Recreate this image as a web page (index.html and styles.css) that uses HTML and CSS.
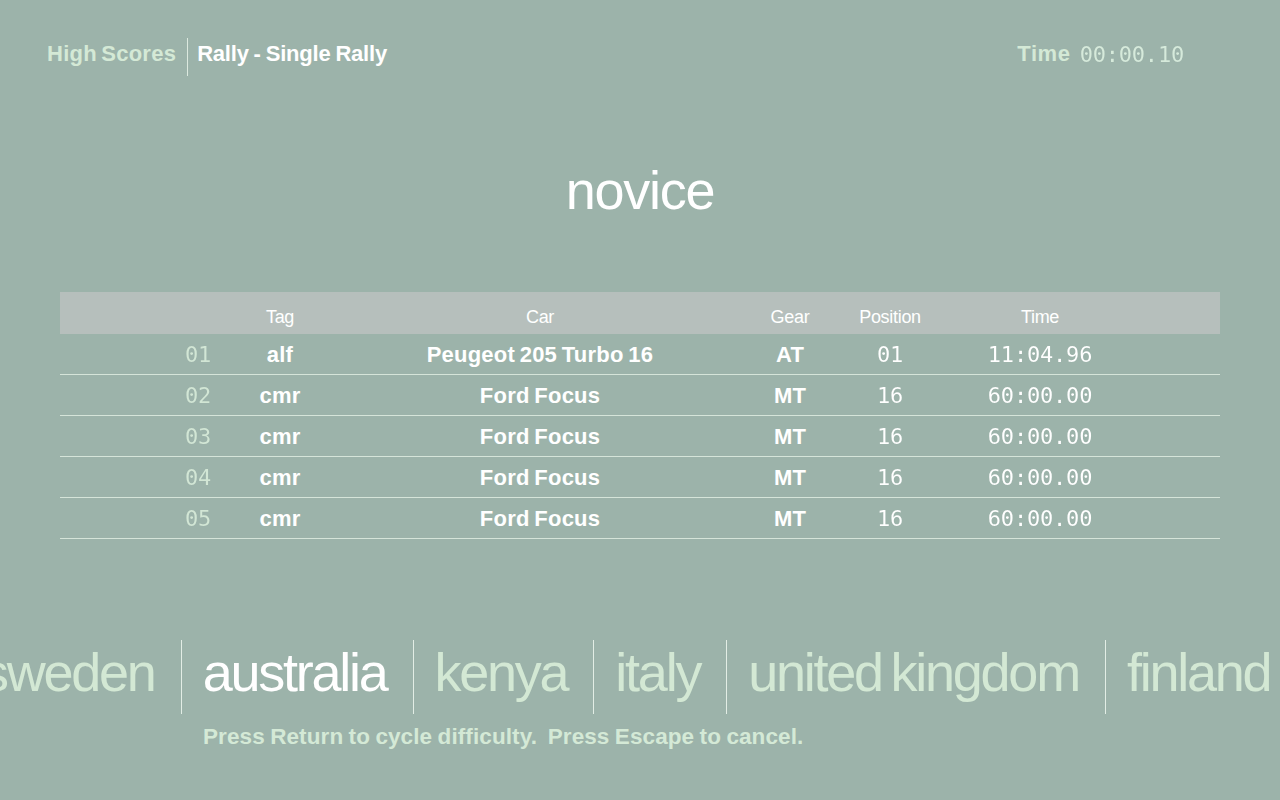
FILE: index.html
```html
<!DOCTYPE html>
<html>
<head>
<meta charset="utf-8">
<link rel="stylesheet" href="styles.css">
</head>
<body>
<div class="screen">
  <header class="top">
    <div class="crumbs">
      <span class="crumb-dim">High Scores</span>
      <span class="crumb-sep"></span>
      <span class="crumb-main">Rally - Single Rally</span>
    </div>
    <div class="timer">
      <span class="timer-label">Time</span>
      <span class="lcd timer-value">00:00.10</span>
    </div>
  </header>

  <h1 class="difficulty">novice</h1>

  <div class="table">
    <div class="row head">
      <span></span><span></span>
      <span>Tag</span><span>Car</span><span>Gear</span><span>Position</span><span>Time</span>
      <span></span>
    </div>
    <div class="row">
      <span></span><span class="lcd rank">01</span>
      <span class="b">alf</span><span class="b">Peugeot 205 Turbo 16</span><span class="b">AT</span><span class="lcd pos">01</span><span class="lcd time">11:04.96</span>
      <span></span>
    </div>
    <div class="row">
      <span></span><span class="lcd rank">02</span>
      <span class="b">cmr</span><span class="b">Ford Focus</span><span class="b">MT</span><span class="lcd pos">16</span><span class="lcd time">60:00.00</span>
      <span></span>
    </div>
    <div class="row">
      <span></span><span class="lcd rank">03</span>
      <span class="b">cmr</span><span class="b">Ford Focus</span><span class="b">MT</span><span class="lcd pos">16</span><span class="lcd time">60:00.00</span>
      <span></span>
    </div>
    <div class="row">
      <span></span><span class="lcd rank">04</span>
      <span class="b">cmr</span><span class="b">Ford Focus</span><span class="b">MT</span><span class="lcd pos">16</span><span class="lcd time">60:00.00</span>
      <span></span>
    </div>
    <div class="row">
      <span></span><span class="lcd rank">05</span>
      <span class="b">cmr</span><span class="b">Ford Focus</span><span class="b">MT</span><span class="lcd pos">16</span><span class="lcd time">60:00.00</span>
      <span></span>
    </div>
  </div>

  <div class="countries">
    <div class="strip">
      <span class="country first">sweden</span>
      <span class="country active">australia</span>
      <span class="country">kenya</span>
      <span class="country">italy</span>
      <span class="country">united kingdom</span>
      <span class="country">finland</span>
    </div>
  </div>

  <p class="hint">Press Return to cycle difficulty.&nbsp; Press Escape to cancel.</p>
</div>
</body>
</html>
```

FILE: styles.css
```css
html, body {
  margin: 0;
  padding: 0;
}

body {
  background: #9cb3aa;
  font-family: "Liberation Sans", Arial, sans-serif;
  color: #ffffff;
}

.screen {
  width: 1280px;
  height: 800px;
  overflow: hidden;
}

.top {
  display: flex;
  justify-content: space-between;
  align-items: center;
  padding: 38px 96px 0 47px;
  height: 38px;
}

.crumbs {
  display: flex;
  align-items: center;
  height: 38px;
  font-weight: 700;
  font-size: 22px;
}

.crumb-dim {
  color: #d4e9d6;
  letter-spacing: 0.25px;
  word-spacing: -2px;
  margin-bottom: 6px;
}

.crumb-sep {
  width: 1px;
  height: 38px;
  background: #dce9df;
  margin: 0 9px 0 11px;
}

.crumb-main {
  color: #ffffff;
  letter-spacing: -0.2px;
  word-spacing: -1px;
  margin-bottom: 6px;
}

.timer {
  display: flex;
  align-items: center;
  gap: 9px;
  margin-bottom: 6px;
}

.timer-label {
  font-weight: 700;
  font-size: 22px;
  letter-spacing: 0.6px;
  color: #d4e9d6;
}

.lcd {
  font-family: "DejaVu Sans Mono", "Liberation Mono", monospace;
  font-weight: 400;
  font-size: 22px;
  letter-spacing: -0.2px;
  color: transparent;
  background-image: radial-gradient(circle at 1px 1px, var(--lcd) 0.95px, transparent 1.15px);
  background-size: 2px 2px;
  -webkit-background-clip: text;
  background-clip: text;
}

.timer-value {
  --lcd: #d6eadb;
}

.difficulty {
  margin: 87px 0 0;
  height: 54px;
  font-size: 54px;
  line-height: 54px;
  font-weight: 400;
  text-align: center;
  letter-spacing: -1.3px;
  color: #ffffff;
}

.table {
  margin: 75px 60px 0;
}

.row {
  display: grid;
  grid-template-columns: 98px 80px 84px 436px 64px 136px 164px 98px;
  align-items: center;
  box-sizing: border-box;
  height: 41px;
  padding-top: 1px;
  border-bottom: 1px solid #d5e4d9;
  text-align: center;
  font-size: 22px;
  letter-spacing: 0.2px;
  word-spacing: -1.5px;
}

.row.head {
  height: 42px;
  padding-top: 8px;
  border-bottom: none;
  background: #b6bfbc;
  font-size: 18px;
  letter-spacing: -0.3px;
  word-spacing: 0;
}

.b {
  font-weight: 700;
}

.rank {
  --lcd: #d2e6d5;
}

.pos {
  --lcd: #ffffff;
}

.time {
  --lcd: #ffffff;
}

.countries {
  margin-top: 101px;
  height: 74px;
  overflow: hidden;
}

.strip {
  display: flex;
  margin-left: -39px;
  white-space: nowrap;
}

.country {
  height: 74px;
  line-height: 64px;
  padding: 0 26px 0 21px;
  border-left: 1px solid #e2ede5;
  font-size: 54px;
  letter-spacing: -2.25px;
  word-spacing: -4px;
  color: #d3e8d4;
}

.country.first {
  border-left: none;
}

.country.active {
  color: #ffffff;
}

.hint {
  margin: 10px 0 0;
  padding-left: 203px;
  font-size: 22.5px;
  font-weight: 700;
  letter-spacing: 0.1px;
  word-spacing: -1px;
  color: #d4e9d6;
}
```
